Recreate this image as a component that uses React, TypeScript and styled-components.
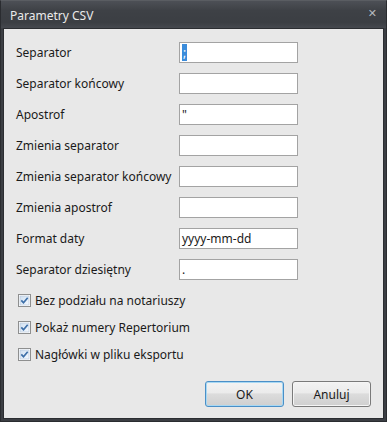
import React, { FC } from "react";
import styled, { createGlobalStyle } from "styled-components";

const GlobalStyle = createGlobalStyle`
  html, body {
    margin: 0;
    padding: 0;
    background: #3a3d42;
  }
  body {
    font-family: "Noto Sans", "Open Sans", "DejaVu Sans", sans-serif;
    font-size: 12px;
    color: #1a1a1a;
  }
`;

const fields: { label: string; value: string; selected?: boolean }[] = [
  { label: "Separator", value: ";", selected: true },
  { label: "Separator końcowy", value: "" },
  { label: "Apostrof", value: '"' },
  { label: "Zmienia separator", value: "" },
  { label: "Zmienia separator końcowy", value: "" },
  { label: "Zmienia apostrof", value: "" },
  { label: "Format daty", value: "yyyy-mm-dd" },
  { label: "Separator dziesiętny", value: "." },
];

const options = [
  "Bez podziału na notariuszy",
  "Pokaż numery Repertorium",
  "Nagłówki w pliku eksportu",
];

const CheckIcon: FC = () => (
  <svg width="13" height="13" viewBox="0 0 13 13">
    <defs>
      <linearGradient id="cbg" x1="0" y1="0" x2="1" y2="1">
        <stop offset="0" stopColor="#cfdff0" />
        <stop offset="1" stopColor="#f4f9ff" />
      </linearGradient>
    </defs>
    <rect x="0.5" y="0.5" width="12" height="12" fill="#fff" stroke="#8e8f8f" />
    <rect x="2" y="2" width="9" height="9" fill="url(#cbg)" stroke="#b3c3d6" strokeWidth="0.6" />
    <path d="M3.3 6.4 L5.5 8.8 L9.7 3.8" fill="none" stroke="#3d6fa8" strokeWidth="1.7" />
  </svg>
);

const App: FC = () => (
  <>
    <GlobalStyle />
    <Window>
      <TitleBar>
        <Title>Parametry CSV</Title>
        <CloseGlyph>✕</CloseGlyph>
      </TitleBar>
      <Body>
        <FormGrid>
          {fields.map((f) => (
            <React.Fragment key={f.label}>
              <Label>{f.label}</Label>
              <TextBox>
                {f.selected ? <Selection>{f.value}</Selection> : f.value}
              </TextBox>
            </React.Fragment>
          ))}
        </FormGrid>
        <Options>
          {options.map((o) => (
            <CheckRow key={o}>
              <CheckIcon />
              <span>{o}</span>
            </CheckRow>
          ))}
        </Options>
        <Buttons>
          <Button $default>OK</Button>
          <Button>Anuluj</Button>
        </Buttons>
      </Body>
    </Window>
  </>
);

export default App;

const Window = styled.div`
  width: 387px;
  height: 422px;
  box-sizing: border-box;
  display: flex;
  flex-direction: column;
  background: #3b3e43;
  border: 1px solid #2a2c30;
  border-top-color: #5a5d62;
`;

const TitleBar = styled.div`
  height: 27px;
  display: flex;
  align-items: center;
  justify-content: space-between;
  padding: 0 9px 0 9px;
  background: linear-gradient(#4d5056, #3e4146 35%, #3b3e43 80%, #45484e);
`;

const Title = styled.div`
  color: #eaeaea;
  font-size: 12px;
  padding-top: 1px;
`;

const CloseGlyph = styled.div`
  color: #b4b8be;
  font-family: "DejaVu Sans", sans-serif;
  font-size: 11px;
  font-weight: bold;
  margin-top: -2px;
`;

const Body = styled.div`
  flex: 1;
  margin: 0 2px 2px 2px;
  background: #e8e8e8;
  border: 1px solid #2b2d31;
  display: flex;
  flex-direction: column;
  padding: 13px 12px 11px 12px;
`;

const FormGrid = styled.div`
  display: grid;
  grid-template-columns: 163px 119px;
  row-gap: 10px;
  align-items: center;
`;

const Label = styled.div`
  white-space: nowrap;
`;

const TextBox = styled.div`
  height: 21px;
  box-sizing: border-box;
  border: 1px solid #a3a3a3;
  background: #fff;
  padding: 0 2px;
  line-height: 19px;
  font-size: 12px;
`;

const Selection = styled.span`
  background: #3b8cdb;
  color: #fff;
  padding: 0 1px;
`;

const Options = styled.div`
  display: flex;
  flex-direction: column;
  gap: 10px;
  margin-top: 12px;
  padding-left: 2px;
`;

const CheckRow = styled.div`
  display: flex;
  align-items: center;
  gap: 4px;
  height: 17px;
`;

const Buttons = styled.div`
  margin-top: auto;
  display: flex;
  justify-content: flex-end;
  gap: 8px;
`;

const Button = styled.div<{ $default?: boolean }>`
  width: 79px;
  height: 26px;
  box-sizing: border-box;
  border: 1px solid ${(p) => (p.$default ? "#4a8fc7" : "#7a7a7a")};
  border-radius: 3px;
  display: flex;
  align-items: center;
  justify-content: center;
  font-size: 12px;
  background: linear-gradient(#f3f3f3, #ebebeb 45%, #dcdcdc 50%, #cfcfcf);
  box-shadow: inset 0 0 0 1px ${(p) => (p.$default ? "#a8d8f3" : "#f5f5f5")};
`;
